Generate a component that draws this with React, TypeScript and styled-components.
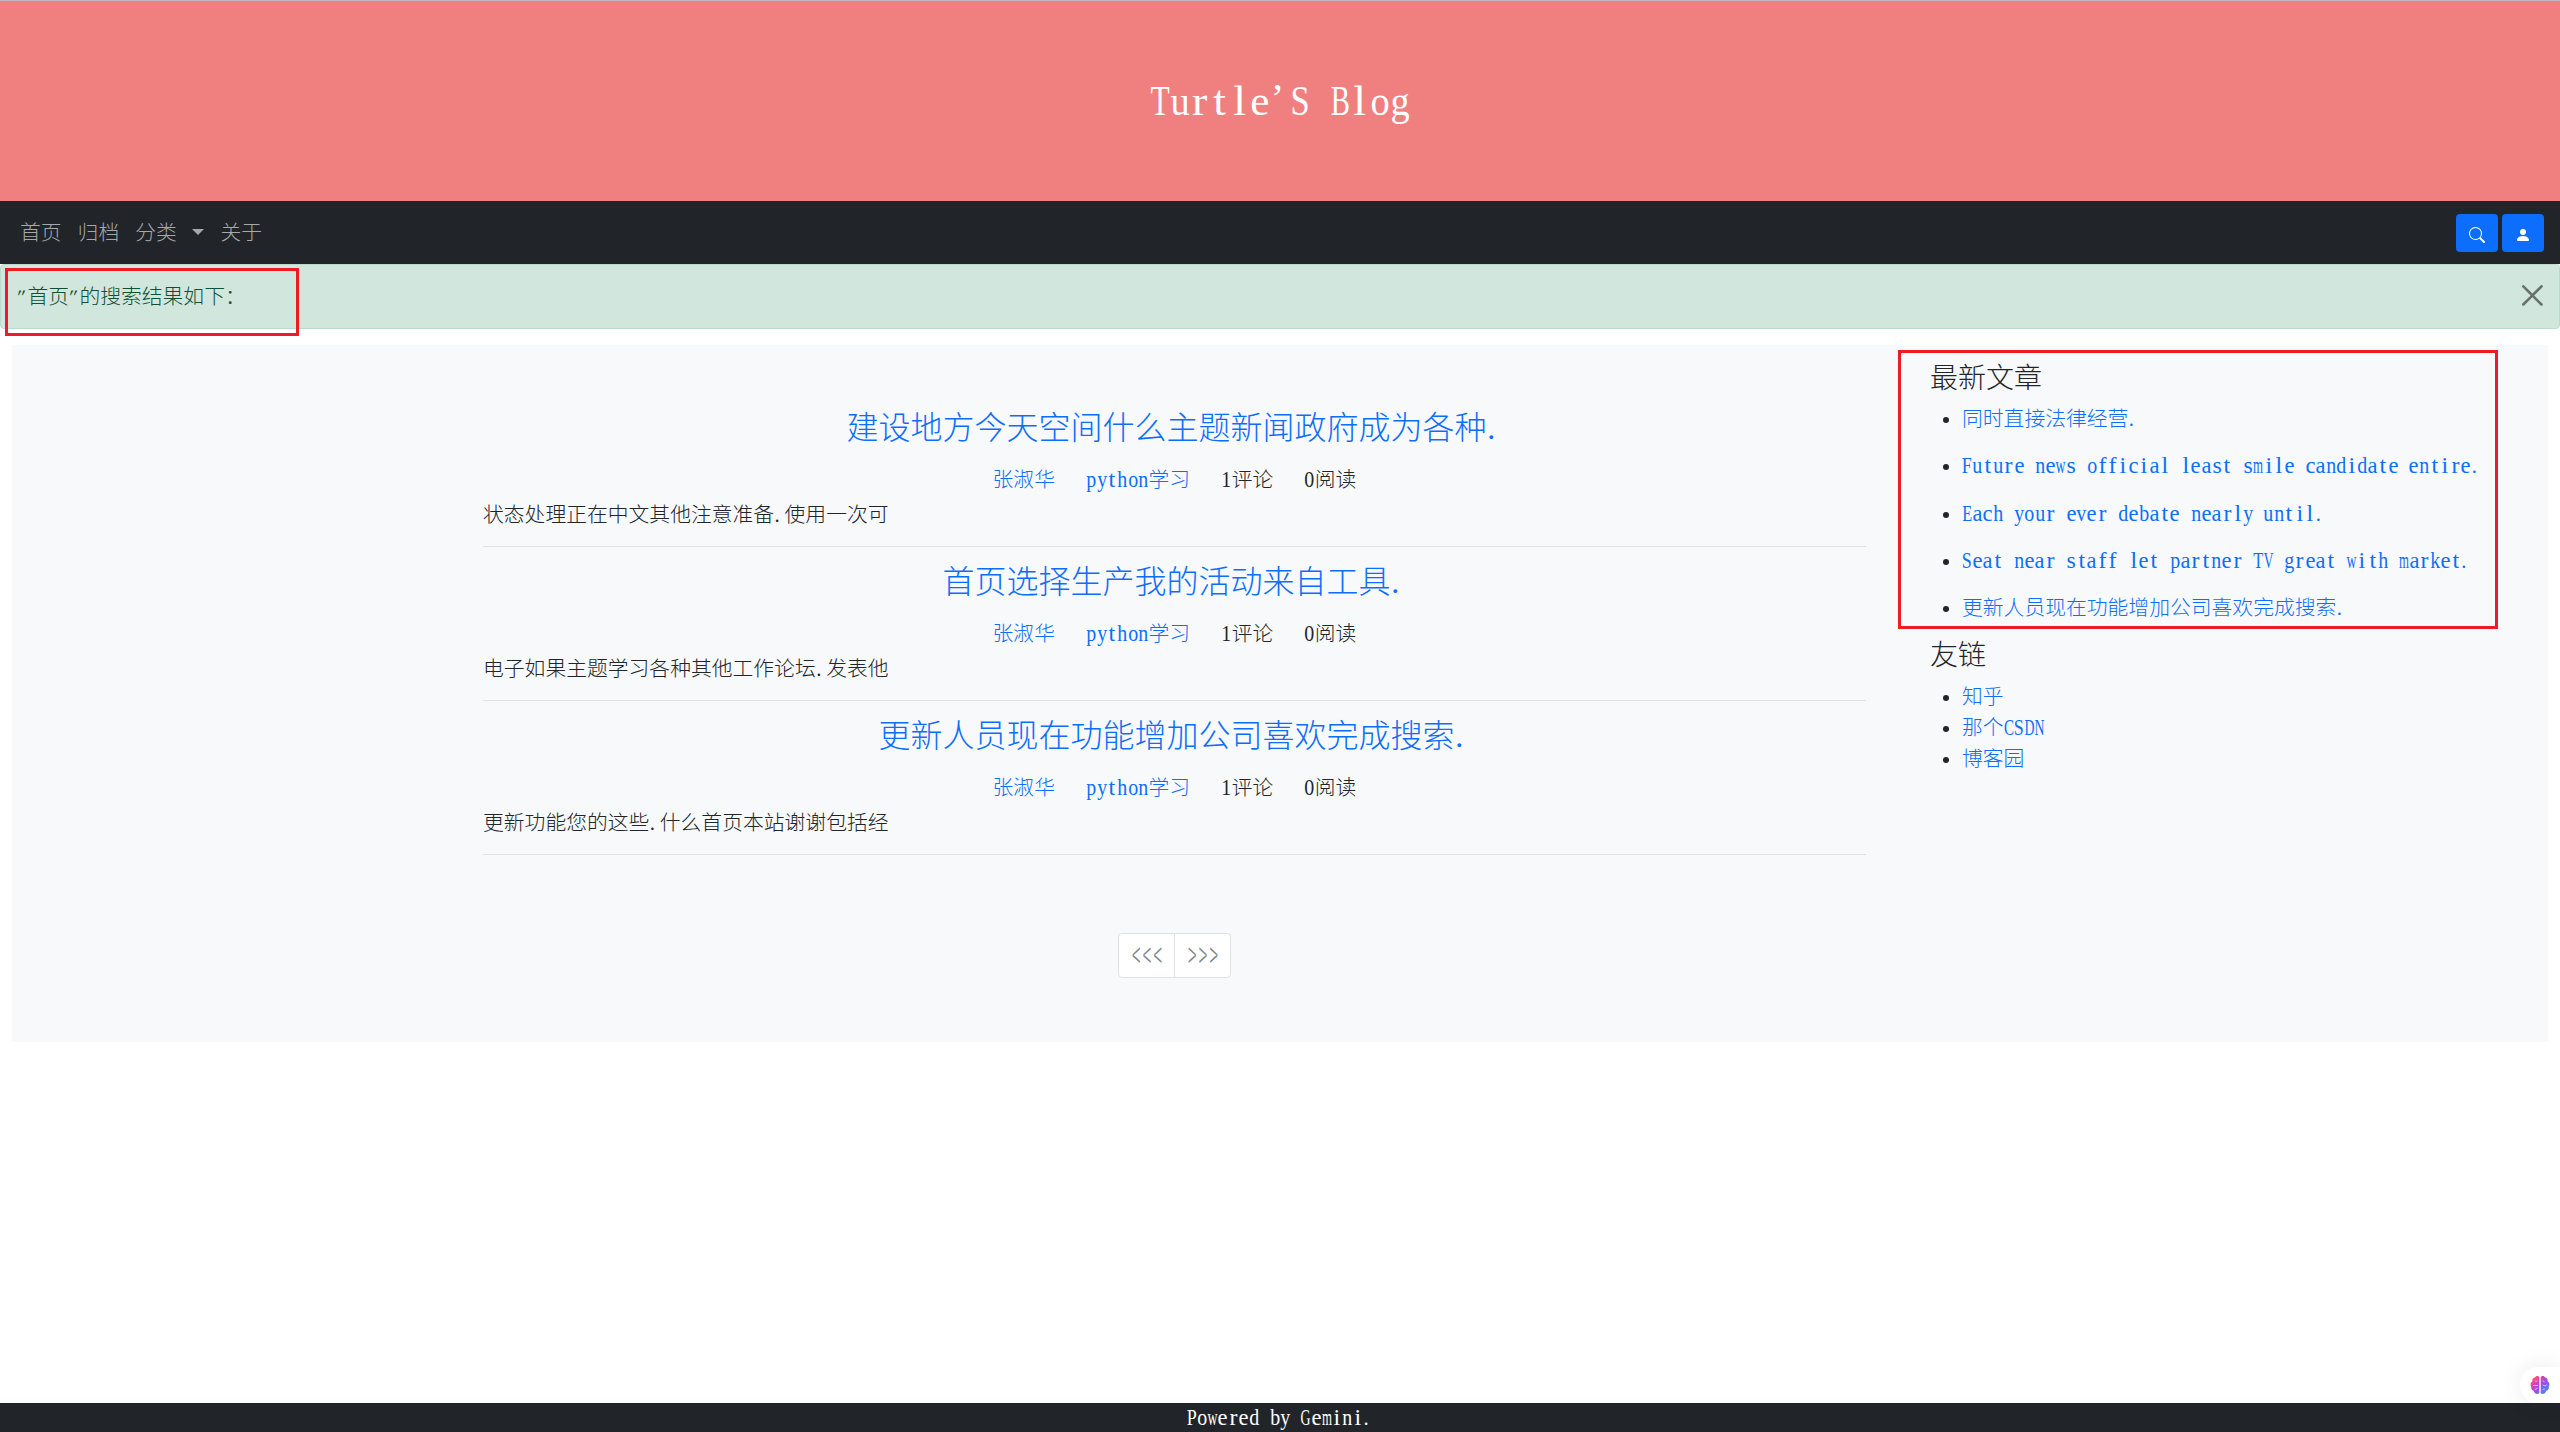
import React from "react";
import styled, { createGlobalStyle, css } from "styled-components";

const Global = createGlobalStyle`
  *, *::before, *::after { box-sizing: border-box; }
  html, body, #root { margin: 0; height: 100%; }
  body {
    background: #fff;
    color: #212529;
    font-family: "Liberation Serif", "Noto Sans CJK SC", serif;
    font-size: 20.8px;
    font-weight: 300;
    line-height: 1.5;
    overflow: hidden;
  }
`;

/* Latin letters sit in half-em cells so that they keep to the grid of the
   full-width characters; wide letters are condensed, narrow ones widened. */
const ctx = document.createElement("canvas").getContext("2d")!;
const stretch = (ch: string) => {
  ctx.font = '100px "Liberation Serif"';
  const width = ctx.measureText(ch).width / 100;
  return Math.min(1.15, Math.max(0.55, 0.48 / width));
};

const Line = styled.span`
  word-spacing: 0.25em;
  white-space: nowrap;
`;

const Word = styled.span`
  display: inline-flex;
`;

const Cell = styled.span<{ $start?: boolean; $slant?: boolean; $raised?: boolean }>`
  display: inline-flex;
  justify-content: ${(p) => (p.$start ? "flex-start" : "center")};
  width: 0.5em;
  padding-left: ${(p) => (p.$start ? "0.02em" : 0)};

  ${(p) =>
    p.$slant &&
    css`
      transform: skewX(-22deg);
      transform-origin: 50% 30%;
    `}

  ${(p) =>
    p.$raised &&
    css`
      transform: translateY(-0.1em);
    `}
`;

const T = ({ children }: { children: string }) => (
  <Line>
    {children.split(/([\x21-\x7e’]+)/).map((part, i) =>
      i % 2 ? (
        <Word key={i}>
          {[...part].map((ch, j) => {
            const mark = ch === "." || ch === "’";
            return (
              <Cell key={j} $start={mark} $slant={ch === '"'} $raised={ch === "’"}>
                {mark || ch === '"' ? (
                  ch
                ) : (
                  <span
                    style={{
                      transform: `scale(${stretch(ch)}, 1.06)`,
                      transformOrigin: "50% 72%",
                    }}
                  >
                    {ch}
                  </span>
                )}
              </Cell>
            );
          })}
        </Word>
      ) : (
        part
      )
    )}
  </Line>
);

const Page = styled.div`
  position: relative;
  display: flex;
  flex-direction: column;
  height: 1432px;
`;

const Banner = styled.header`
  display: flex;
  justify-content: center;
  height: 201px;
  padding-top: 77px;
  background: #f08080;
  border-top: 1px solid #c4b4c4;
`;

const BannerTitle = styled.h1`
  margin: 0;
  color: #fff;
  font-size: 40px;
  font-weight: 300;
  line-height: 48px;
`;

const Navbar = styled.nav`
  display: flex;
  align-items: center;
  justify-content: space-between;
  height: 63px;
  padding: 0 16px 0 12px;
  background: #212529;
`;

const NavLinks = styled.div`
  display: flex;
`;

const NavLink = styled.a`
  padding: 0 8px;
  color: #a6a8a9;
`;

const Caret = styled.span`
  display: inline-block;
  margin-left: 15.7px;
  vertical-align: 5.3px;
  border: 6.24px solid transparent;
  border-top-color: currentColor;
  border-bottom: 0;
`;

const Buttons = styled.div`
  display: flex;
  gap: 4px;
`;

const IconButton = styled.button`
  display: flex;
  align-items: center;
  justify-content: center;
  width: 42px;
  height: 38px;
  padding: 4px 0 0;
  border: 0;
  border-radius: 4px;
  background: #0d6efd;
  color: #fff;
`;

const Alert = styled.div`
  display: flex;
  align-items: flex-start;
  justify-content: space-between;
  height: 65px;
  padding: 16px;
  border: 1px solid #badbcc;
  border-radius: 4px;
  background: #d1e7dd;
  color: #0f5132;
`;

const CloseIcon = styled.svg`
  width: 20.8px;
  height: 20.8px;
  margin-top: 4px;
  opacity: 0.5;
`;

const Content = styled.main`
  display: grid;
  grid-template-columns: 1383px 1fr;
  column-gap: 64px;
  height: 697px;
  margin: 16px 12px 0;
  padding-left: 471px;
  background: #f8f9fb;
`;

const Posts = styled.section`
  padding-top: 64px;
`;

const PostCard = styled.article`
  height: 154px;
`;

const PostTitle = styled.h2`
  margin: 0 0 17px;
  color: #0d6efd;
  font-size: 32px;
  font-weight: 300;
  line-height: 38.4px;
  text-align: center;
`;

const Meta = styled.div`
  display: flex;
  justify-content: center;
  gap: 31.2px;
  margin-bottom: 3px;
`;

const Link = styled.a`
  color: #0d6efd;
`;

const Excerpt = styled.p`
  height: 48.4px;
  margin: 0;
  border-bottom: 1px solid #dfe1e3;
`;

const Pager = styled.div`
  display: flex;
  width: max-content;
  margin: 62px auto 0;
  background: #fff;
  border: 1px solid #dee2e6;
  border-radius: 4px;
`;

const PageButton = styled.span`
  display: flex;
  align-items: center;
  justify-content: center;
  width: 55px;
  height: 43px;
  color: #7c858c;
  font-family: "Noto Sans CJK SC", sans-serif;

  & + & {
    width: 56px;
    border-left: 1px solid #dee2e6;
  }
`;

const Arrows = styled.span`
  letter-spacing: 3px;
  margin-right: -3px;
  transform: translateY(-2px) scale(0.76, 1.8);
`;

const Sidebar = styled.aside`
  padding-top: 16.6px;
`;

const SideTitle = styled.h3`
  margin: 0 0 8px;
  font-size: 28px;
  font-weight: 300;
  line-height: 33.6px;
`;

const List = styled.ul<{ $gap?: number }>`
  margin: 0;
  padding-left: 32px;

  ${({ $gap = 0 }) => css`
    li {
      height: 31.2px;
      margin-bottom: ${$gap}px;
    }
  `}
`;

const Footer = styled.footer`
  margin-top: auto;
  height: 29px;
  background: #212529;
  color: #fff;
  line-height: 29px;
  text-align: center;
`;

const Marker = styled.div<{ $x: number; $y: number; $w: number; $h: number }>`
  position: absolute;
  left: ${(p) => p.$x}px;
  top: ${(p) => p.$y}px;
  width: ${(p) => p.$w}px;
  height: ${(p) => p.$h}px;
  border: 3px solid #ed1c24;
`;

const Assistant = styled.div`
  position: absolute;
  right: 0;
  bottom: 29px;
  display: flex;
  align-items: center;
  width: 40px;
  height: 36px;
  padding-left: 10px;
  border-radius: 18px 0 0 18px;
  background: #fff;
  box-shadow: 0 0 24px rgba(0, 0, 0, 0.08);
`;

const posts = [
  ["建设地方今天空间什么主题新闻政府成为各种.", "状态处理正在中文其他注意准备.使用一次可"],
  ["首页选择生产我的活动来自工具.", "电子如果主题学习各种其他工作论坛.发表他"],
  ["更新人员现在功能增加公司喜欢完成搜索.", "更新功能您的这些.什么首页本站谢谢包括经"],
];

const latest = [
  "同时直接法律经营.",
  "Future news official least smile candidate entire.",
  "Each your ever debate nearly until.",
  "Seat near staff let partner TV great with market.",
  "更新人员现在功能增加公司喜欢完成搜索.",
];

const friends = ["知乎", "那个CSDN", "博客园"];

export default function App() {
  return (
    <Page>
      <Global />
      <Banner>
        <BannerTitle>
          <T>Turtle’S Blog</T>
        </BannerTitle>
      </Banner>
      <Navbar>
        <NavLinks>
          <NavLink>首页</NavLink>
          <NavLink>归档</NavLink>
          <NavLink>
            分类
            <Caret />
          </NavLink>
          <NavLink>关于</NavLink>
        </NavLinks>
        <Buttons>
          <IconButton>
            <svg width="16" height="16" viewBox="0 0 16 16" fill="currentColor">
              <path d="M11.742 10.344a6.5 6.5 0 1 0-1.397 1.398h-.001c.03.04.062.078.098.115l3.85 3.85a1 1 0 0 0 1.415-1.414l-3.85-3.85a1.007 1.007 0 0 0-.115-.1zM12 6.5a5.5 5.5 0 1 1-11 0 5.5 5.5 0 0 1 11 0z" />
            </svg>
          </IconButton>
          <IconButton>
            <svg width="16" height="16" viewBox="0 0 16 16" fill="currentColor">
              <path d="M3 14s-1 0-1-1 1-4 6-4 6 3 6 4-1 1-1 1H3zm5-6a3 3 0 1 0 0-6 3 3 0 0 0 0 6z" />
            </svg>
          </IconButton>
        </Buttons>
      </Navbar>
      <Alert>
        <T>"首页"的搜索结果如下：</T>
        <CloseIcon viewBox="0 0 16 16">
          <path d="M.293.293a1 1 0 0 1 1.414 0L8 6.586 14.293.293a1 1 0 1 1 1.414 1.414L9.414 8l6.293 6.293a1 1 0 0 1-1.414 1.414L8 9.414l-6.293 6.293a1 1 0 0 1-1.414-1.414L6.586 8 .293 1.707a1 1 0 0 1 0-1.414z" />
        </CloseIcon>
      </Alert>
      <Content>
        <Posts>
          {posts.map(([title, excerpt]) => (
            <PostCard key={title}>
              <PostTitle>
                <T>{title}</T>
              </PostTitle>
              <Meta>
                <Link>张淑华</Link>
                <Link>
                  <T>python学习</T>
                </Link>
                <T>1评论</T>
                <T>0阅读</T>
              </Meta>
              <Excerpt>
                <T>{excerpt}</T>
              </Excerpt>
            </PostCard>
          ))}
          <Pager>
            <PageButton>
              <Arrows>&lt;&lt;&lt;</Arrows>
            </PageButton>
            <PageButton>
              <Arrows>&gt;&gt;&gt;</Arrows>
            </PageButton>
          </Pager>
        </Posts>
        <Sidebar>
          <SideTitle>最新文章</SideTitle>
          <List $gap={16}>
            {latest.map((item) => (
              <li key={item}>
                <Link>
                  <T>{item}</T>
                </Link>
              </li>
            ))}
          </List>
          <SideTitle>友链</SideTitle>
          <List>
            {friends.map((item) => (
              <li key={item}>
                <Link>
                  <T>{item}</T>
                </Link>
              </li>
            ))}
          </List>
        </Sidebar>
      </Content>
      <Footer>
        <T>Powered by Gemini.</T>
      </Footer>
      <Marker $x={5} $y={268} $w={294} $h={68} />
      <Marker $x={1898} $y={350} $w={600} $h={279} />
      <Assistant>
        <svg width="20" height="20" viewBox="0 0 20 20">
          <defs>
            <linearGradient id="brain" x1="0" y1="0" x2="1" y2="1">
              <stop offset="0" stopColor="#ff8a3c" />
              <stop offset="0.25" stopColor="#f0419a" />
              <stop offset="0.55" stopColor="#9a4cf0" />
              <stop offset="1" stopColor="#1fa0ff" />
            </linearGradient>
          </defs>
          <path
            fill="url(#brain)"
            d="M9.3 2.2C8.6.6 5.6.4 4.8 2.6 2.6 2.8 2 5 2.5 6.3 0.6 7.2 0 10 1.2 11.6 0.8 14 2.2 15.5 3.8 15.8 4.5 19.5 8.5 19.7 9.3 17.8zM10.7 2.2C11.4.6 14.4.4 15.2 2.6 17.4 2.8 18 5 17.5 6.3 19.4 7.2 20 10 18.8 11.6 19.2 14 17.8 15.5 16.2 15.8 15.5 19.5 11.5 19.7 10.7 17.8z"
          />
          <path
            fill="none"
            stroke="#fff"
            strokeOpacity="0.65"
            strokeWidth="0.9"
            d="M5 6h2.5M3 10.5h5M5 14.5l2.5-1M12.5 5.5l2 1.5M12.5 10l2.5 1 2-1.5M12.5 14.5l2.5-.5"
          />
        </svg>
      </Assistant>
    </Page>
  );
}
